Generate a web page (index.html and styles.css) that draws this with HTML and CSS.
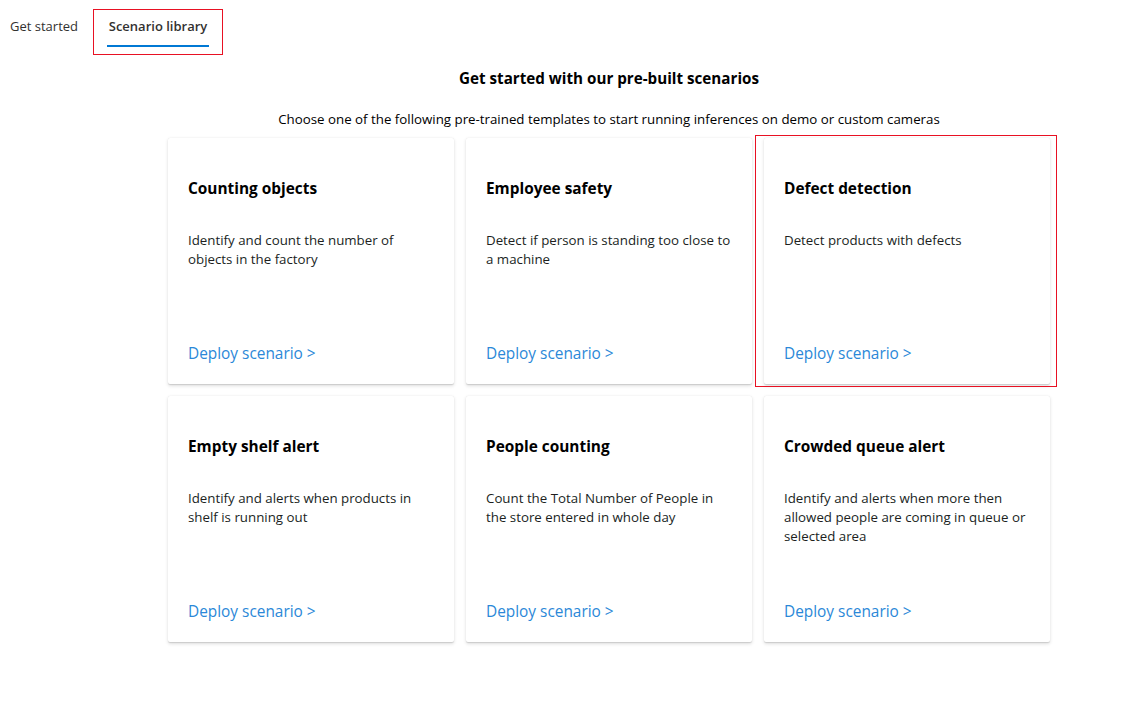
FILE: index.html
```html
<!DOCTYPE html>
<html lang="en">
<head>
<meta charset="utf-8">
<title>Scenario library</title>
<link rel="stylesheet" href="styles.css">
</head>
<body>
<nav class="tabs">
  <div class="tab">Get started</div>
  <div class="tab-wrap">
    <div class="tab active">Scenario library</div>
  </div>
</nav>
<main class="main">
  <h1 class="title">Get started with our pre-built scenarios</h1>
  <p class="subtitle">Choose one of the following pre-trained templates to start running inferences on demo or custom cameras</p>
  <div class="grid">
    <section class="card">
      <h2 class="card-title">Counting objects</h2>
      <p class="card-desc">Identify and count the number of objects in the factory</p>
      <a class="card-link">Deploy scenario &gt;</a>
    </section>
    <section class="card">
      <h2 class="card-title">Employee safety</h2>
      <p class="card-desc">Detect if person is standing too close to a machine</p>
      <a class="card-link">Deploy scenario &gt;</a>
    </section>
    <section class="card highlighted">
      <h2 class="card-title">Defect detection</h2>
      <p class="card-desc">Detect products with defects</p>
      <a class="card-link">Deploy scenario &gt;</a>
    </section>
    <section class="card">
      <h2 class="card-title">Empty shelf alert</h2>
      <p class="card-desc">Identify and alerts when products in shelf is running out</p>
      <a class="card-link">Deploy scenario &gt;</a>
    </section>
    <section class="card">
      <h2 class="card-title">People counting</h2>
      <p class="card-desc">Count the Total Number of People in the store entered in whole day</p>
      <a class="card-link">Deploy scenario &gt;</a>
    </section>
    <section class="card">
      <h2 class="card-title">Crowded queue alert</h2>
      <p class="card-desc">Identify and alerts when more then allowed people are coming in queue or selected area</p>
      <a class="card-link">Deploy scenario &gt;</a>
    </section>
  </div>
</main>
</body>
</html>
```

FILE: styles.css
```css
html, body {
  margin: 0;
  padding: 0;
  background: #ffffff;
}
body {
  font-family: "Open Sans", "Noto Sans", sans-serif;
  color: #201f1e;
  width: 1141px;
  height: 717px;
  overflow: hidden;
}
.tabs {
  display: flex;
  align-items: flex-start;
  height: 55px;
  padding-left: 10px;
}
.tab {
  font-size: 13px;
  line-height: 20px;
  color: #323130;
  padding-top: 16px;
}
.tab-wrap {
  margin-left: 15px;
  margin-top: 9px;
  width: 128px;
  height: 44px;
  border: 1px solid #e81123;
  box-sizing: content-box;
  display: flex;
  justify-content: center;
}
.tab.active {
  font-weight: 600;
  padding-top: 6px;
  padding-bottom: 9px;
  border-bottom: 2px solid #0078d4;
  height: 20px;
  padding-left: 2px;
  padding-right: 2px;
}
.main {
  margin-left: 168px;
  width: 882px;
  display: flex;
  flex-direction: column;
  align-items: center;
}
.title {
  margin: 12px 0 0;
  font-size: 15.2px;
  line-height: 22px;
  font-weight: 700;
  color: #000;
}
.subtitle {
  margin: 20px 0 0;
  font-size: 13.3px;
  line-height: 20px;
  color: #000;
}
.grid {
  margin-top: 9px;
  display: grid;
  grid-template-columns: repeat(3, 286px);
  grid-auto-rows: 246px;
  gap: 12px;
}
.card {
  position: relative;
  background: #fff;
  border-radius: 2px;
  box-shadow: 0 1.6px 3.6px rgba(0,0,0,0.13), 0 0.3px 0.9px rgba(0,0,0,0.11);
  padding: 40px 20px 19px;
  display: flex;
  flex-direction: column;
  box-sizing: border-box;
}
.card.highlighted::after {
  content: "";
  position: absolute;
  left: -9px;
  top: -3px;
  right: -7px;
  bottom: -3px;
  border: 1px solid #e81123;
  pointer-events: none;
}
.card-title {
  margin: 0;
  font-size: 15.4px;
  line-height: 22px;
  font-weight: 700;
  color: #000;
}
.card-desc {
  margin: 31px 0 0;
  font-size: 13.3px;
  line-height: 19px;
  color: #201f1e;
}
.card-link {
  margin-top: auto;
  font-size: 15.4px;
  line-height: 22px;
  color: #2b88d8;
  cursor: pointer;
}
```
